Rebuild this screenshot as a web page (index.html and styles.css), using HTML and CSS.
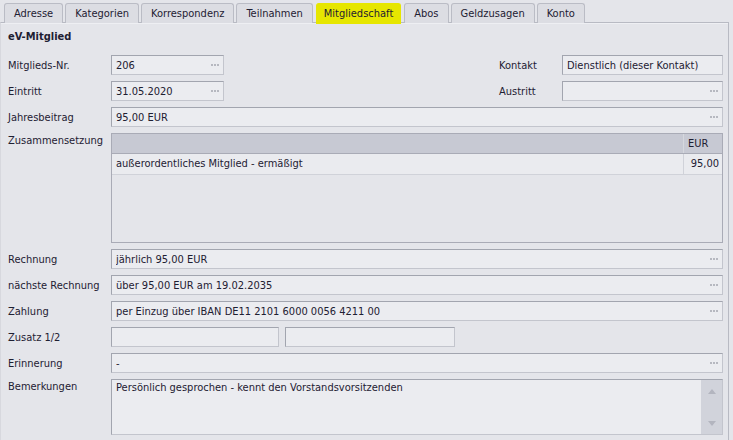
FILE: index.html
```html
<!DOCTYPE html>
<html lang="de">
<head>
<meta charset="utf-8">
<title>Mitgliedschaft</title>
<link rel="stylesheet" href="styles.css">
</head>
<body>
<div class="tabs">
  <div class="tab">Adresse</div>
  <div class="tab">Kategorien</div>
  <div class="tab">Korrespondenz</div>
  <div class="tab">Teilnahmen</div>
  <div class="tab active">Mitgliedschaft</div>
  <div class="tab">Abos</div>
  <div class="tab">Geldzusagen</div>
  <div class="tab">Konto</div>
</div>
<div class="panel">
  <div class="title">eV-Mitglied</div>
  <div class="rows">
    <div class="row">
      <div class="lbl">Mitglieds-Nr.</div>
      <div class="field short"><span class="val">206</span><span class="dots"></span></div>
      <div class="spacer"></div>
      <div class="lbl2">Kontakt</div>
      <div class="field side"><span class="val">Dienstlich (dieser Kontakt)</span></div>
    </div>
    <div class="row">
      <div class="lbl">Eintritt</div>
      <div class="field short"><span class="val">31.05.2020</span><span class="dots"></span></div>
      <div class="spacer"></div>
      <div class="lbl2">Austritt</div>
      <div class="field side"><span class="val"></span><span class="dots"></span></div>
    </div>
    <div class="row">
      <div class="lbl">Jahresbeitrag</div>
      <div class="field grow"><span class="val">95,00 EUR</span><span class="dots"></span></div>
    </div>
    <div class="row top">
      <div class="lbl">Zusammensetzung</div>
      <div class="grid">
        <div class="ghead"><div class="gc1"></div><div class="gc2">EUR</div></div>
        <div class="grow-row"><div class="gc1">außerordentliches Mitglied - ermäßigt</div><div class="gc2 num">95,00</div></div>
      </div>
    </div>
    <div class="row">
      <div class="lbl">Rechnung</div>
      <div class="field grow"><span class="val">jährlich 95,00 EUR</span><span class="dots"></span></div>
    </div>
    <div class="row">
      <div class="lbl">nächste Rechnung</div>
      <div class="field grow"><span class="val">über 95,00 EUR am 19.02.2035</span><span class="dots"></span></div>
    </div>
    <div class="row">
      <div class="lbl">Zahlung</div>
      <div class="field grow"><span class="val">per Einzug über IBAN DE11 2101 6000 0056 4211 00</span><span class="dots"></span></div>
    </div>
    <div class="row">
      <div class="lbl">Zusatz 1/2</div>
      <div class="field extra1"></div>
      <div class="field extra2"></div>
    </div>
    <div class="row">
      <div class="lbl">Erinnerung</div>
      <div class="field grow"><span class="val">-</span><span class="dots"></span></div>
    </div>
    <div class="row top">
      <div class="lbl">Bemerkungen</div>
      <div class="memo">
        <div class="memo-text">Persönlich gesprochen - kennt den Vorstandsvorsitzenden</div>
        <div class="scroll"><span class="arrow up"></span><span class="arrow down"></span></div>
      </div>
    </div>
  </div>
</div>
</body>
</html>
```
FILE: styles.css
```css
* { box-sizing: border-box; }
html, body { margin: 0; padding: 0; }
body {
  width: 733px;
  height: 440px;
  overflow: hidden;
  background: #e4e5ea;
  font-family: "DejaVu Sans Condensed", "DejaVu Sans", sans-serif;
  font-stretch: condensed;
  font-size: 11px;
  color: #1e2032;
}
.tabs {
  display: flex;
  gap: 2px;
  height: 23px;
  padding: 3px 0 0 4px;
  position: relative;
  z-index: 1;
}
.tab {
  height: 20px;
  padding: 0 9px;
  border: 1px solid #babcc5;
  border-bottom: none;
  border-radius: 3px 3px 0 0;
  background: #dcdde3;
  line-height: 19px;
  white-space: nowrap;
}
.tab.active {
  background: #e6e600;
  border-color: #e6e600;
  padding: 0 7px;
  height: 21px;
  margin: 0 1px;
}
.panel {
  width: 729px;
  height: 430px;
  margin-top: -1px;
  border: 1px solid #b8bac3;
  border-left-color: #d7d8de;
  background: #e4e5ea;
  box-shadow: inset 0 1px 0 #eeeff3;
  padding: 6px 5px 0 7px;
}
.title {
  font-weight: bold;
  height: 16px;
  line-height: 16px;
  margin-bottom: 10px;
}
.rows {
  display: flex;
  flex-direction: column;
  gap: 6px;
}
.row {
  display: flex;
  align-items: center;
  height: 20px;
}
.row.top { align-items: flex-start; height: auto; }
.row.top .lbl { padding-top: 1px; }
.lbl { width: 103px; flex: none; white-space: nowrap; }
.lbl2 { width: 63px; flex: none; white-space: nowrap; }
.spacer { flex: 1; }
.field {
  height: 20px;
  display: flex;
  align-items: center;
  background: #ebecf0;
  border: 1px solid;
  border-color: #a2a5af #c3c5cd #c3c5cd #a2a5af;
  padding: 0 4px 0 4px;
}
.val { flex: 1; white-space: nowrap; overflow: hidden; }
.dots {
  width: 8px;
  height: 2px;
  flex: none;
  background: linear-gradient(to right, #b6b8c0 2px, transparent 2px) 0 0 / 3px 2px repeat-x;
}
.field.short { width: 113px; }
.field.side { width: 161px; }
.field.grow { flex: 1; }
.field.extra1 { width: 168px; }
.field.extra2 { width: 170px; margin-left: 6px; }
.grid {
  flex: 1;
  height: 110px;
  border: 1px solid #a9abb6;
  background: #e4e5ea;
}
.ghead {
  display: flex;
  height: 20px;
  background: #c7c9d3;
  border-bottom: 1px solid #a9abb6;
}
.grow-row {
  display: flex;
  height: 21px;
  background: #eaebef;
  border-bottom: 1px solid #d0d2d9;
}
.gc1 { flex: 1; padding: 0 4px; line-height: 20px; white-space: nowrap; }
.gc2 { width: 39px; padding: 0 4px; line-height: 20px; border-left: 1px solid #d6d8de; }
.grow-row .gc2 { border-left-color: #d0d2d9; }
.gc2.num { text-align: right; padding-right: 3px; }
.memo {
  flex: 1;
  height: 56px;
  display: flex;
  background: #ebecf0;
  border: 1px solid;
  border-color: #a2a5af #c3c5cd #c3c5cd #a2a5af;
}
.memo-text { flex: 1; padding: 1px 4px; white-space: nowrap; }
.scroll {
  width: 21px;
  background: #d1d3db;
  display: flex;
  flex-direction: column;
  align-items: center;
  justify-content: space-between;
  padding: 9px 0 8px;
}
.arrow { width: 0; height: 0; border-left: 4px solid transparent; border-right: 4px solid transparent; }
.arrow.up { border-bottom: 5px solid #b3b5bf; }
.arrow.down { border-top: 5px solid #b3b5bf; }
```
